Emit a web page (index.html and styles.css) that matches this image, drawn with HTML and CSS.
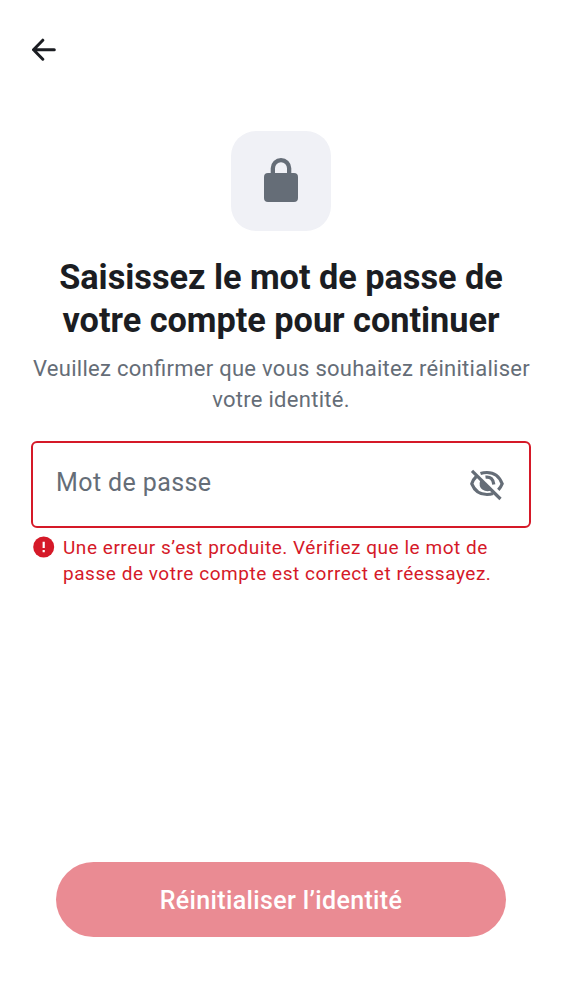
FILE: index.html
```html
<!DOCTYPE html>
<html lang="fr">
<head>
<meta charset="utf-8">
<title>Réinitialiser l’identité</title>
<link rel="stylesheet" href="styles.css">
</head>
<body>
<main class="screen">
  <header class="topbar">
    <svg class="back" viewBox="0 0 24 24"><path d="M10.800 2.200 1.500 11.700 10.800 21.200M1.700 11.700H22.300"/></svg>
  </header>
  <section class="hero">
    <div class="badge">
      <svg class="lock" viewBox="0 0 34 44"><path fill-rule="evenodd" d="M4 44Q0 44 0 40V19Q0 15 4 15H6.700V10.300A10.300 10.300 0 0 1 27.300 10.300V15H30Q34 15 34 19V40Q34 44 30 44ZM11 15H23V10.300A6 6 0 0 0 11 10.300Z"/></svg>
    </div>
    <h1 class="title"><span>Saisissez le mot de passe de</span><br><span>votre compte pour continuer</span></h1>
    <p class="subtitle"><span>Veuillez confirmer que vous souhaitez réinitialiser</span><br><span>votre identité.</span></p>
  </section>
  <div class="field">
    <span class="placeholder">Mot de passe</span>
    <svg class="eye" viewBox="0 0 36 34"><g class="lines"><path d="M11.500 5.500Q14.500 4.500 18 4.500C25 4.500 30.500 8.800 33.200 15.800Q32 19 29.300 21.800M7.300 8.500Q4 11.500 2.800 15.800C5.500 22.500 11 26.500 18 26.500Q21.500 26.500 24 25.500M16.500 9.200Q24 8.200 24.800 16.500"/><path d="M3 2.800 31.500 31"/></g><path d="M11.200 12.200Q9.300 18.500 13.300 21.500Q17.300 24.300 22 22.500Z"/></svg>
  </div>
  <div class="error">
    <svg class="alert" viewBox="0 0 22 22"><circle cx="10.700" cy="11" r="10.500"/><path d="M10.700 5.700v6.300M10.700 14v2.300"/></svg>
    <p class="message"><span>Une erreur s’est produite. Vérifiez que le mot de</span><br><span>passe de votre compte est correct et réessayez.</span></p>
  </div>
  <button class="submit">Réinitialiser l’identité</button>
</main>
</body>
</html>
```
FILE: styles.css
```css
* { box-sizing: border-box; }
body { margin: 0; background: #fff; font-family: Roboto, sans-serif; }
.screen { display: flex; flex-direction: column; height: 1000px; padding: 38px 31px 63px; }
.topbar { height: 24px; }
.back { display: block; width: 24px; height: 24px; margin-left: 1px; fill: none; stroke: #1b1d22; stroke-width: 3; stroke-linecap: round; stroke-linejoin: round; }
.hero { display: flex; flex-direction: column; align-items: center; padding-top: 69px; text-align: center; white-space: nowrap; }
.badge { display: grid; place-items: center; width: 100px; height: 100px; padding-bottom: 2px; border-radius: 25px; background: #f0f1f6; }
.lock { width: 34px; height: 44px; fill: #656d77; }
.title { margin: 25px 0 0; font-size: 34.300px; line-height: 42.500px; font-weight: 700; letter-spacing: -.03px; color: #1b1d22; }
.subtitle { margin: 12px 0 0; font-size: 22px; line-height: 31px; letter-spacing: .28px; text-indent: 1px; font-feature-settings: "liga" 1; color: #656d77; }
.field { display: flex; align-items: center; justify-content: space-between; height: 87px; margin-top: 26px; padding: 0 24px 0 23px; border: 2px solid #d51928; border-radius: 6px; }
.placeholder { padding-bottom: 4px; font-size: 25px; letter-spacing: .4px; color: #656d77; }
.eye { width: 36px; height: 34px; margin-top: 1px; fill: #656d77; }
.lines { fill: none; stroke: #656d77; stroke-width: 3.200; }
.error { display: flex; gap: 8px; margin-top: 7px; padding-left: 2px; color: #d51928; white-space: nowrap; }
.alert { width: 22px; height: 22px; margin-top: 1px; fill: #d51928; }
.alert path { stroke: #fff; stroke-width: 2.200; }
.message { margin: 0; font-size: 19px; line-height: 26px; letter-spacing: .54px; }
.submit { height: 75px; margin: auto 25px 0; padding-bottom: 0; border: 0; border-radius: 38px; background: #ea8b93; color: #fff; font: 500 25px Roboto, sans-serif; letter-spacing: .36px; }
```
